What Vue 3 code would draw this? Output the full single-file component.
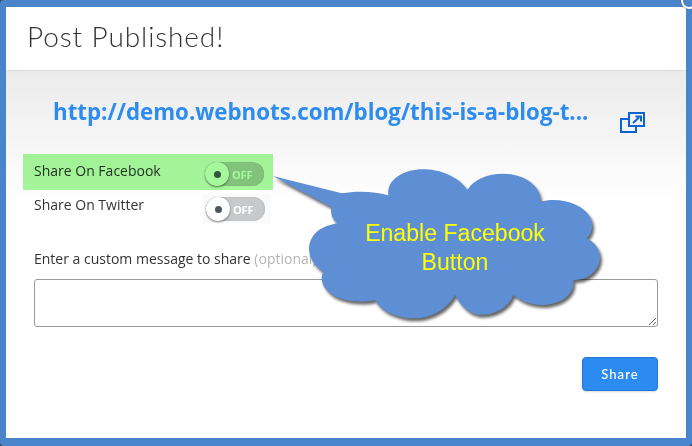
<script setup>
const rows = [
  { label: 'Share On Facebook', cls: 'fb' },
  { label: 'Share On Twitter', cls: 'tw' }
]
</script>

<template>
  <div class="page">
    <div class="frame">
      <div class="modal">
        <header class="head"><h1>Post Published!</h1></header>
        <main class="body">
          <div class="linkrow">
            <a class="link">http://demo.webnots.com/blog/this-is-a-blog-t...</a>
            <svg class="ext" width="25" height="21" viewBox="0 0 25 21" fill="none">
              <path d="M8 7H1V20H16V15" stroke="#0a64d4" stroke-width="2" />
              <rect x="9" y="1" width="15" height="13" stroke="#0a64d4" stroke-width="2" />
              <path d="M13 11l6-5.500M15.500 4.500H21V9.500" stroke="#0a64d4" stroke-width="2" />
            </svg>
          </div>
          <div v-for="r in rows" :key="r.label" class="row" :class="r.cls">
            <span class="label">{{ r.label }}</span>
            <span class="toggle-box">
              <span class="toggle">
                <span class="knob"><i></i></span>
                <span class="off">OFF</span>
              </span>
            </span>
          </div>
          <label class="msg">Enter a custom message to share <span>(optional)</span></label>
          <textarea class="area"></textarea>
          <div class="actions"><button class="share">Share</button></div>
        </main>
      </div>
    </div>
    <span class="corner"></span>
    <div class="hilite"></div>
    <div class="callout">
      <svg class="cloud" width="360" height="180" viewBox="0 0 1080 540">
        <path fill="#5e8fd5" d="M38 78L245 130C290 122 345 124 385 136C378 85 440 55 495 58C550 60 600 85 622 120C650 75 720 62 775 78C820 92 845 125 840 155C900 140 965 160 990 200C1003 228 995 250 980 265C1020 285 1030 325 1010 355C995 380 965 392 940 390C945 425 915 458 860 464C820 468 785 455 760 435C745 475 700 497 655 494C625 490 600 465 585 435C560 480 510 507 455 505C405 503 360 480 345 450C290 462 225 450 200 420C182 400 182 380 190 365C155 345 135 300 155 265C170 235 205 225 232 220C215 205 210 190 215 172Z" />
      </svg>
      <p class="note">Enable Facebook<br />Button</p>
    </div>
  </div>
</template>

<style scoped>
.page {
  position: relative;
  width: 692px;
  height: 446px;
  overflow: hidden;
  background: #3c4048;
}
.frame {
  box-sizing: border-box;
  height: 100%;
  padding: 7px 6px 8px;
  border-radius: 4px;
  background: #4a84cb;
}
.modal {
  height: 100%;
  display: flex;
  flex-direction: column;
  background: #fff;
}
.head {
  box-sizing: border-box;
  height: 64px;
  padding: 12px 21px 0;
  border-bottom: 1px solid #dcdcdc;
}
h1 {
  margin: 0;
  font: 300 28px/34px Lato, "Open Sans", sans-serif;
  letter-spacing: 0.9px;
  color: #333;
}
.body {
  flex: 1;
  padding: 0 28px;
  background: linear-gradient(#ebebeb, #fff 130px);
  font-family: "Open Sans", sans-serif;
}
.linkrow {
  display: flex;
  align-items: flex-start;
  height: 90px;
  padding: 27px 0 0 19px;
  box-sizing: border-box;
}
.link {
  font-size: 22.300px;
  line-height: 28px;
  font-weight: 700;
  color: #2f8cef;
  white-space: nowrap;
}
.ext {
  margin: 14px 0 0 32px;
  flex: none;
}
.row {
  display: flex;
  height: 35px;
  color: #333;
  font-size: 14px;
}
.label {
  width: 169px;
  line-height: 20px;
}
.tw .label {
  margin-top: -1px;
  height: 20px;
}
.toggle-box {
  box-sizing: border-box;
  width: 67px;
  height: 29px;
  padding: 3px;
  margin-top: -2px;
}
.tw .toggle-box {
  background: #fafafa;
}
.fb .toggle-box {
  margin-left: -1px;
}
.toggle {
  position: relative;
  display: flex;
  align-items: center;
  width: 59px;
  height: 24px;
  border-radius: 12px;
  background: #c8c9cb;
  box-shadow: inset 0 0 1px #8a8a8a;
}
.knob {
  flex: none;
  display: flex;
  align-items: center;
  justify-content: center;
  width: 24px;
  height: 24px;
  border-radius: 50%;
  background: #fff;
  box-shadow: 0 1px 2px rgba(0, 0, 0, 0.5);
}
.knob i {
  width: 7px;
  height: 7px;
  border-radius: 50%;
  background: #4b5662;
}
.off {
  margin-left: 3px;
  font-size: 11px;
  font-weight: 700;
  letter-spacing: -0.2px;
  color: #fff;
}
.msg {
  display: block;
  margin-top: 18px;
  font-size: 14px;
  line-height: 20px;
  color: #333;
}
.msg span {
  color: #b5b5b5;
}
.area {
  display: block;
  box-sizing: border-box;
  width: 624px;
  height: 48px;
  margin-top: 10px;
  border: 1px solid #9a9a9a;
  border-radius: 3px;
  background: #fff;
  outline: none;
}
.actions {
  display: flex;
  justify-content: flex-end;
  margin-top: 30px;
}
.share {
  box-sizing: border-box;
  width: 76px;
  height: 34px;
  border: 1px solid #2577d4;
  border-radius: 4px;
  background: #2b8bf1;
  box-shadow: 0 1px 2px rgba(0, 0, 0, 0.15);
  color: #fff;
  font: 500 13px Lato, sans-serif;
  letter-spacing: 1.1px;
}
.corner {
  position: absolute;
  top: -7px;
  right: -5px;
  width: 12px;
  height: 12px;
  border: 2px solid #fff;
  border-radius: 50%;
  background: #4a84cb;
  box-shadow: 0 0 1px #222;
}
.hilite {
  position: absolute;
  left: 23px;
  top: 154px;
  width: 250px;
  height: 36px;
  background: #a6f89c;
  mix-blend-mode: multiply;
}
.callout {
  position: absolute;
  left: 260px;
  top: 150px;
  width: 360px;
  height: 180px;
}
.cloud {
  display: block;
  overflow: visible;
  filter: drop-shadow(2px 3px 1.500px rgba(0, 0, 0, 0.6));
}
.note {
  position: absolute;
  left: 55px;
  top: 69px;
  width: 280px;
  margin: 0;
  text-align: center;
  font: 23.100px/29px "Liberation Sans", Arial, sans-serif;
  color: #ffff00;
}
</style>
